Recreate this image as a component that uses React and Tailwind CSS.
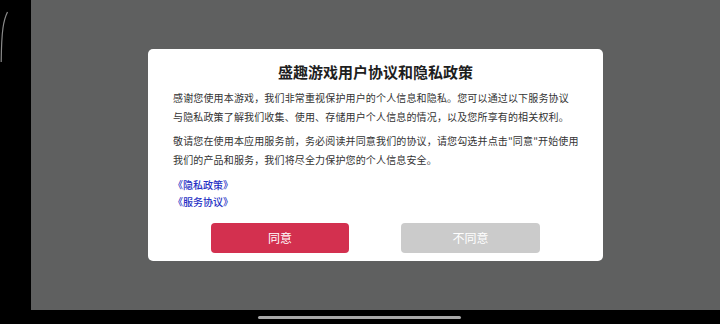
import React from 'react'

const cjk = { fontFamily: '"Noto Sans CJK SC", "Noto Sans", sans-serif' }

/**
 * Privacy agreement dialog over a dimmed game screen
 */
export default function App() {
  return (
    <div className="relative w-[720px] h-[324px] bg-black flex overflow-hidden" style={cjk}>
      <div className="w-[31px] h-full shrink-0">
        <svg width="31" height="80" viewBox="0 0 31 80">
          <path d="M7.5 12 C3.5 20 1.5 30 1.2 62" stroke="#8a8a8a" strokeWidth="1.2" fill="none" />
        </svg>
      </div>

      <div className="flex-1 flex flex-col">
        <div className="h-[310px] bg-[#5f6060] flex items-center justify-center">
          <div className="w-[455px] h-[212px] bg-white rounded-[5px] px-[20px] pt-[13px] flex flex-col">
            <h1 className="text-center text-[15px] leading-[20px] font-semibold text-[#1e1e1e]">
              盛趣游戏用户协议和隐私政策
            </h1>
            <div className="mt-[6px] pl-[5px] text-[10px] leading-[19px] tracking-[0.15px] text-[#333] whitespace-nowrap">
              <p>
                感谢您使用本游戏，我们非常重视保护用户的个人信息和隐私。您可以通过以下服务协议
                <br />
                与隐私政策了解我们收集、使用、存储用户个人信息的情况，以及您所享有的相关权利。
              </p>
              <p className="mt-[5px]">
                敬请您在使用本应用服务前，务必阅读并同意我们的协议，请您勾选并点击"同意"开始使用
                <br />
                我们的产品和服务，我们将尽全力保护您的个人信息安全。
              </p>
            </div>
            <div className="mt-[7px] pl-[5px] text-[10px] leading-[17px] font-medium text-[#2630c4]">
              <p>《隐私政策》</p>
              <p>《服务协议》</p>
            </div>
            <div className="mt-[13px] flex justify-center gap-[52px]">
              <button className="w-[138px] h-[30px] rounded-[4px] bg-[#d3304f] text-white text-[12px]">同意</button>
              <button className="w-[139px] h-[30px] rounded-[4px] bg-[#cbcbcb] text-white text-[12px]">不同意</button>
            </div>
          </div>
        </div>
        <div className="flex-1" />
      </div>

      <div className="absolute left-[258px] top-[316px] w-[203px] h-[3px] rounded-full bg-[#a8a8a8]" />
    </div>
  )
}
